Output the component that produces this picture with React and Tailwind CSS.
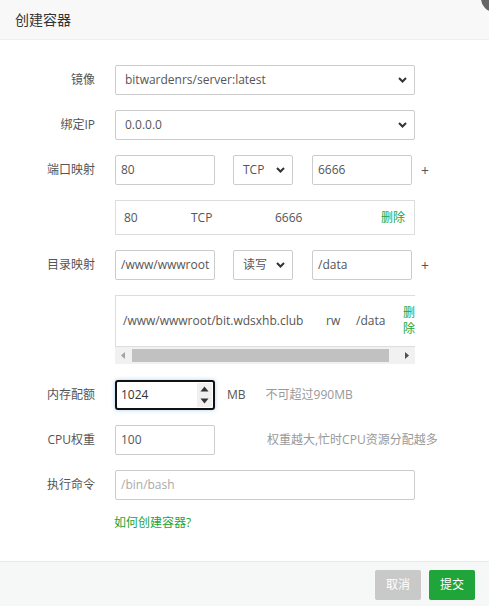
import React from "react";

const font = { fontFamily: '"Open Sans", "Noto Sans CJK SC", sans-serif' };

function Chevron() {
  return (
    <svg width="9" height="6" viewBox="0 0 9 6" className="absolute right-[7px] top-[11px]">
      <path d="M1 1 L4.5 4.5 L8 1" fill="none" stroke="#333" strokeWidth="2" />
    </svg>
  );
}

function Label({ children }) {
  return (
    <div className="w-[95px] shrink-0 text-right pr-0 text-[12px] text-[#555] leading-[30px]">{children}</div>
  );
}

function Select({ w, children }) {
  return (
    <div className={`relative h-[30px] ${w} border border-[#ccc] rounded-[2px] bg-white text-[12px] text-[#555] leading-[28px] pl-[9px]`}>
      {children}
      <Chevron />
    </div>
  );
}

function Input({ w, children, muted }) {
  return (
    <div className={`h-[30px] ${w} border border-[#ccc] rounded-[2px] bg-white text-[12px] ${muted ? "text-[#aaa]" : "text-[#555]"} leading-[28px] pl-[5px] overflow-hidden whitespace-nowrap`}>
      {children}
    </div>
  );
}

export default function App() {
  return (
    <div className="relative w-[489px] h-[606px] overflow-hidden bg-white flex flex-col" style={font}>
      <div className="h-[40px] shrink-0 bg-[#f8f8f8] border-b border-[#eee] pl-[15px] text-[14px] text-[#333] leading-[39px]">
        创建容器
      </div>
      <div className="absolute right-[-19px] top-[-15px] w-[27px] h-[27px] rounded-full bg-[#666]" />

      <div className="flex-1 flex flex-col pt-[25px]">
        <div className="flex items-center gap-[20px]">
          <Label>镜像</Label>
          <Select w="w-[300px]">bitwardenrs/server:latest</Select>
        </div>
        <div className="flex items-center gap-[20px] mt-[15px]">
          <Label>绑定IP</Label>
          <Select w="w-[300px]">0.0.0.0</Select>
        </div>
        <div className="flex items-center gap-[20px] mt-[15px]">
          <Label>端口映射</Label>
          <div className="flex items-center">
            <Input w="w-[100px]">80</Input>
            <div className="ml-[18px]"><Select w="w-[60px]">TCP</Select></div>
            <div className="ml-[19px]"><Input w="w-[100px]">6666</Input></div>
            <div className="ml-[9px] text-[14px] text-[#555]">+</div>
          </div>
        </div>
        <div className="ml-[115px] mt-[15px] w-[300px] h-[35px] border border-[#ddd] flex items-center text-[12px] text-[#555]">
          <span className="ml-[8px] w-[67px]">80</span>
          <span className="w-[84px]">TCP</span>
          <span className="w-[106px]">6666</span>
          <span className="text-[#20a53a]">删除</span>
        </div>
        <div className="flex items-center gap-[20px] mt-[15px]">
          <Label>目录映射</Label>
          <div className="flex items-center">
            <Input w="w-[100px]">/www/wwwroot</Input>
            <div className="ml-[18px]"><Select w="w-[60px]">读写</Select></div>
            <div className="ml-[19px]"><Input w="w-[100px]">/data</Input></div>
            <div className="ml-[9px] text-[14px] text-[#555]">+</div>
          </div>
        </div>
        <div className="ml-[115px] mt-[15px] w-[300px] overflow-hidden">
          <div className="w-[360px] h-[52px] border border-[#ddd] flex items-center text-[12px] text-[#555]">
            <span className="ml-[7px] w-[203px] whitespace-nowrap">/www/wwwroot/bit.wdsxhb.club</span>
            <span className="w-[30px]">rw</span>
            <span className="w-[47px]">/data</span>
            <span className="w-[13px] text-[#20a53a] leading-[16px]">删除</span>
          </div>
          <div className="h-[17px] bg-[#f1f1f1] flex items-center">
            <svg width="17" height="17" viewBox="0 0 17 17"><path d="M10 5 L6 8.5 L10 12 Z" fill="#a3a3a3" /></svg>
            <div className="h-[13px] w-[257px] bg-[#c1c1c1]" />
            <div className="flex-1" />
            <svg width="17" height="17" viewBox="0 0 17 17"><path d="M7 5 L11 8.5 L7 12 Z" fill="#505050" /></svg>
          </div>
        </div>
        <div className="flex items-center gap-[20px] mt-[16px]">
          <Label>内存配额</Label>
          <div className="flex items-center">
            <div className="relative h-[30px] w-[100px] border-2 border-[#111] rounded-[3px] bg-white text-[12px] text-[#333] leading-[26px] pl-[4px] shadow-[0_0_4px_rgba(100,160,230,0.5)]">
              1024
              <div className="absolute right-[1px] top-[1px] bottom-[1px] w-[15px] bg-[#f0f0f0] flex flex-col items-center justify-around">
                <svg width="9" height="6" viewBox="0 0 9 6"><path d="M0.5 5.5 L4.5 0.5 L8.5 5.5 Z" fill="#333" /></svg>
                <svg width="9" height="6" viewBox="0 0 9 6"><path d="M0.5 0.5 L4.5 5.5 L8.5 0.5 Z" fill="#333" /></svg>
              </div>
            </div>
            <span className="ml-[12px] text-[12px] text-[#555]">MB</span>
            <span className="ml-[20px] text-[12px] text-[#999]">不可超过990MB</span>
          </div>
        </div>
        <div className="flex items-center gap-[20px] mt-[15px]">
          <Label>CPU权重</Label>
          <div className="flex items-center">
            <Input w="w-[100px]">100</Input>
            <span className="ml-[52px] text-[12px] text-[#999]">权重越大,忙时CPU资源分配越多</span>
          </div>
        </div>
        <div className="flex items-center gap-[20px] mt-[15px]">
          <Label>执行命令</Label>
          <Input w="w-[300px]" muted>/bin/bash</Input>
        </div>
        <div className="ml-[114px] mt-[14px] text-[12px] text-[#20a53a]">如何创建容器?</div>
      </div>

      <div className="h-[45px] shrink-0 bg-[#f6f8f8] border-t border-[#e8e8e8] flex justify-end items-start pt-[8px] pr-[14px] gap-[8px]">
        <div className="w-[46px] h-[30px] rounded-[2px] bg-[#c9c9c9] text-white text-[12px] leading-[30px] text-center">取消</div>
        <div className="w-[46px] h-[30px] rounded-[2px] bg-[#20a53a] text-white text-[12px] leading-[30px] text-center">提交</div>
      </div>
    </div>
  );
}
